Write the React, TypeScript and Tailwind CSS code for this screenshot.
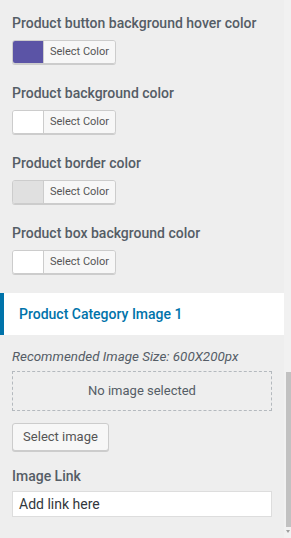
import React from "react";

const font = { fontFamily: "Roboto, 'Noto Sans', Arial, sans-serif" };

function ColorControl({ title, color, first }: { title: string; color: string; first?: boolean }) {
  return (
    <div className={first ? "pt-[13px]" : "pt-[19px]"}>
      <div className="text-[14px] leading-[20px] font-medium text-[#555d66] px-3">{title}</div>
      <div className="px-3 mt-[7px]">
        <div className="flex h-[24px] w-[104px] rounded-[3px] border border-[#cccccc] overflow-hidden shadow-[0_1px_0_#cccccc]">
          <div className="w-[31px] h-full border-r border-[#cccccc]" style={{ backgroundColor: color }} />
          <div className="flex-1 bg-[#f7f7f7] flex items-center justify-center text-[11px] text-[#555555]">
            Select Color
          </div>
        </div>
      </div>
    </div>
  );
}

export default function App() {
  return (
    <div className="w-[291px] h-[538px] flex bg-[#eeeeee] overflow-hidden" style={font}>
      <div className="w-[284px] flex flex-col">
        <ColorControl first title="Product button background hover color" color="#5b54a6" />
        <ColorControl title="Product background color" color="#ffffff" />
        <ColorControl title="Product border color" color="#e0e0e0" />
        <ColorControl title="Product box background color" color="#ffffff" />

        <div className="mt-[19px] h-[42px] bg-white border-l-4 border-[#0073aa] flex items-center pl-[15px]">
          <span className="text-[14px] font-medium text-[#0073aa]">Product Category Image 1</span>
        </div>

        <div className="px-3 pt-[13px]">
          <div className="text-[13.4px] leading-[18px] italic text-[#555d66]">Recommended Image Size: 600X200px</div>
          <div className="mt-[5px] h-[40px] border border-dashed border-[#b4b9be] flex items-center justify-center text-[13px] text-[#555d66]">
            No image selected
          </div>
          <div className="mt-[12px] w-[97px] h-[28px] rounded-[3px] border border-[#cccccc] bg-[#f7f7f7] shadow-[0_1px_0_#cccccc] flex items-center justify-center text-[13px] text-[#555555]">
            Select image
          </div>
          <div className="mt-[15px] text-[14px] leading-[20px] font-medium text-[#555d66]">Image Link</div>
          <div className="mt-[5px] h-[26px] border border-[#dddddd] bg-white flex items-center px-[6px] text-[14px] text-[#32373c]">
            Add link here
          </div>
        </div>
      </div>
      <div className="w-[7px] bg-[#f1f1f1] flex flex-col">
        <div className="h-[372px]" />
        <div className="ml-[2px] w-[5px] h-[155px] bg-[#c1c1c1]" />
        <div className="flex justify-end pr-[1px] pt-[3px]">
          <div className="w-0 h-0 border-l-[2px] border-r-[2px] border-t-[3px] border-l-transparent border-r-transparent border-t-[#a0a0a0]" />
        </div>
      </div>
    </div>
  );
}
